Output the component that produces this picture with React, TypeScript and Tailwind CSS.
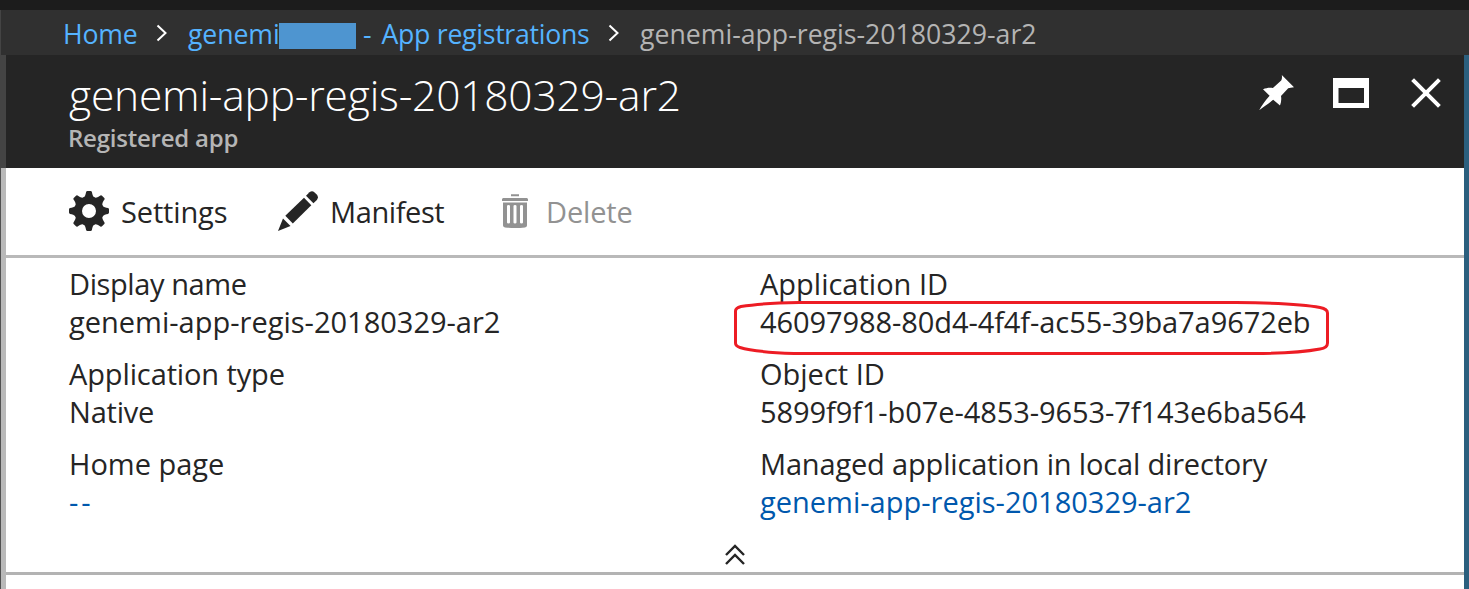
import type { ReactNode } from 'react';

function Separator() {
  return (
    <svg width="12" height="18" viewBox="0 0 12 18" fill="none" className="shrink-0">
      <path d="M1.5 1.5 9.500 9l-8 7.500" stroke="#fff" strokeWidth="2" />
    </svg>
  );
}

function PinIcon() {
  return (
    <svg width="36" height="36" viewBox="0 0 36 36" fill="#fff">
      <path d="M22.8 0 35 12.2C32.6 12.8 30.6 12.6 29.2 13.2L22 21c.6 3.4.2 6.6-1 9.4L14.2 24.8C9 29 4.4 32.3.2 35.2 2.6 30.8 6 26 10.6 20.8L4 14.3c3.6-1.5 7-1.9 9.9-1.2L22.2 5.6C23 4 23.2 2 22.8 0Z" />
    </svg>
  );
}

function GearIcon() {
  return (
    <svg width="40" height="40" viewBox="-20 -20 40 40" fill="#252525">
      {[0, 45, 90, 135, 180, 225, 270, 315].map((a) => (
        <path key={a} transform={`rotate(${a})`} d="M-6-13C-3.6-14.5-3.3-17-2.9-19Q-2.6-20-1.6-20H1.6Q2.6-20 2.9-19C3.3-17 3.6-14.5 6-13V-10H-6Z" />
      ))}
      <circle r="10.7" fill="none" stroke="#252525" strokeWidth="7.4" />
    </svg>
  );
}

function PencilIcon() {
  return (
    <svg width="40" height="40" viewBox="0 0 40 40" fill="#252525">
      <path d="M0 40 5 27.5 12.5 35Z" />
      <path d="M7.3 24.8 26 6.7 33.3 14.2 14.8 32.5Z" />
      <path d="M28 4.8 31.5 1.3Q34-1 36.6 1.4L38.7 3.6Q41 6.2 38.9 8.9L35.4 12.3Z" />
    </svg>
  );
}

function TrashIcon() {
  return (
    <svg width="26" height="34" viewBox="0 0 26 34" fill="#929292">
      <path d="M9 .3h8v2H9zM1 3.900h24l1 1v2H0v-2z" />
      <path fillRule="evenodd" d="M1 8.500h24V31.500Q25 33 23 33.400Q13 34.600 3 33.400Q1 33 1 31.500ZM5 12V28.500Q5 29.500 6.500 29.500T8 28.500V12Q8 11 6.500 11T5 12ZM11.500 12V28.500Q11.500 29.500 13 29.500T14.500 28.500V12Q14.500 11 13 11T11.500 12ZM18 12V28.500Q18 29.500 19.500 29.500T21 28.500V12Q21 11 19.500 11T18 12Z" />
    </svg>
  );
}

function Field({ label, labelClass = '', children }: { label: string; labelClass?: string; children: ReactNode }) {
  return (
    <div>
      <div className={labelClass}>{label}</div>
      {children}
    </div>
  );
}

export default function App() {
  return (
    <div className="flex h-[589px] w-[1469px] flex-col overflow-hidden bg-[#1c1c1c] pt-[10px] font-['Open_Sans',sans-serif] whitespace-nowrap">
      <nav className="flex h-[45px] shrink-0 items-center border-l border-[#444] bg-[#303030] pl-[62px] text-[26.67px] leading-[45px] text-[#55b3ff]">
        <a className="w-[93px] pt-[2px] tracking-[-0.2px]">Home</a>
        <Separator />
        <a className="ml-[20px] flex items-center">
          <span className="w-[91px] pt-[2px] tracking-[-0.1px]">genemi</span>
          <span className="mt-[7px] h-[26px] w-[77px] self-center bg-[#4e95d0]" />
          <span className="ml-[7px] w-[18.500px] pt-[2px]">-</span>
          <span className="w-[226.500px] pt-[2px] tracking-[-0.28px]">App registrations</span>
        </a>
        <Separator />
        <span className="ml-[20px] pt-[2px] text-[#b4b4b4]">genemi-app-regis-20180329-ar2</span>
      </nav>

      <div className="flex min-h-0 flex-1">
        <div className="flex w-[6px] shrink-0 flex-col">
          <div className="h-[113px] bg-[#444]" />
          <div className="flex-1 border-l border-[#505050] bg-[#b9b9b9]" />
        </div>

        <main className="flex flex-1 flex-col bg-white">
          <header className="flex h-[113px] shrink-0 justify-between bg-[#252525] pr-[23px] pl-[63px]">
            <div className="pt-[15px]">
              <h1 className="text-[42.5px] leading-[49px] font-light tracking-[-0.2px] text-white">genemi-app-regis-20180329-ar2</h1>
              <p className="-ml-px text-[24px] leading-[37px] font-semibold tracking-[-0.22px] text-[#b5b5b5]">Registered app</p>
            </div>
            <div className="flex items-start pt-5">
              <PinIcon />
              <svg width="36" height="30" viewBox="0 0 36 30" className="mt-[3px] ml-[38px]">
                <path fill="#fff" fillRule="evenodd" d="M0 0h36v30H0zM5.500 10v15h25.500V10z" />
              </svg>
              <svg width="30" height="30" viewBox="0 0 30 30" className="mt-[3px] ml-[42px]">
                <path stroke="#fff" strokeWidth="4" d="m1.600 1.600 26.800 26.800M28.400 1.600 1.600 28.400" />
              </svg>
            </div>
          </header>

          <div className="flex h-[90px] shrink-0 items-center border-b-3 border-[#b9b9b9] pl-[63px] text-[29px] text-[#252525]">
            <div className="flex w-[209px] items-center gap-[12px]">
              <span className="-mt-[2px]"><GearIcon /></span>
              <span className="tracking-[-0.15px]">Settings</span>
            </div>
            <div className="flex w-[224px] items-center gap-[12px]">
              <span className="-mt-[2px]"><PencilIcon /></span>
              <span className="tracking-[-0.4px]">Manifest</span>
            </div>
            <div className="flex items-center gap-[18px] text-[#929292]">
              <span className="-mt-[2px]"><TrashIcon /></span>
              <span className="tracking-[-0.15px]">Delete</span>
            </div>
          </div>

          <section className="flex h-[317px] shrink-0 flex-col border-b-3 border-[#b3b3b3] pt-[7px] text-[29px] leading-[38px] text-[#252525]">
            <div className="flex pl-[63px]">
              <div className="flex w-[691px] flex-col gap-[14px]">
                <Field label="Display name" labelClass="tracking-[-0.4px]">genemi-app-regis-20180329-ar2</Field>
                <Field label="Application type" labelClass="tracking-[-0.12px]">
                  <div className="tracking-[-0.2px]">Native</div>
                </Field>
                <Field label="Home page">
                  <a className="tracking-[2.800px] text-[#0058ad]">--</a>
                </Field>
              </div>
              <div className="flex flex-col gap-[14px]">
                <Field label="Application ID">
                  <div className="relative tracking-[-0.08px]">
                    46097988-80d4-4f4f-ac55-39ba7a9672eb
                    <svg width="595" height="54" viewBox="0 0 595 54" fill="none" className="absolute -top-[2px] -left-[26px] max-w-none">
                      <path d="M65 1.500H502Q564 2 586 6.500Q593.500 8 593.500 12V42Q593.500 47 586 48Q562 52.500 520 52.500H60Q20 51 6 46.500Q1.500 45 1.500 42V10Q1.500 7 7 5.500Q28 2 65 1.500Z" stroke="#ed1c24" strokeWidth="3" />
                    </svg>
                  </div>
                </Field>
                <Field label="Object ID">
                  <div className="tracking-[-0.08px]">5899f9f1-b07e-4853-9653-7f143e6ba564</div>
                </Field>
                <Field label="Managed application in local directory" labelClass="tracking-[-0.17px]">
                  <a className="text-[#0058ad]">genemi-app-regis-20180329-ar2</a>
                </Field>
              </div>
            </div>
            <button className="mt-[23px] flex justify-center">
              <svg width="20" height="22" viewBox="0 0 20 22" fill="none" stroke="#252525" strokeWidth="2.400">
                <path d="m1 11 9-9 9 9M1 20l9-9 9 9" />
              </svg>
            </button>
          </section>
        </main>

        <div className="w-[5px] shrink-0 bg-[#2b5f7e]" />
      </div>
    </div>
  );
}
